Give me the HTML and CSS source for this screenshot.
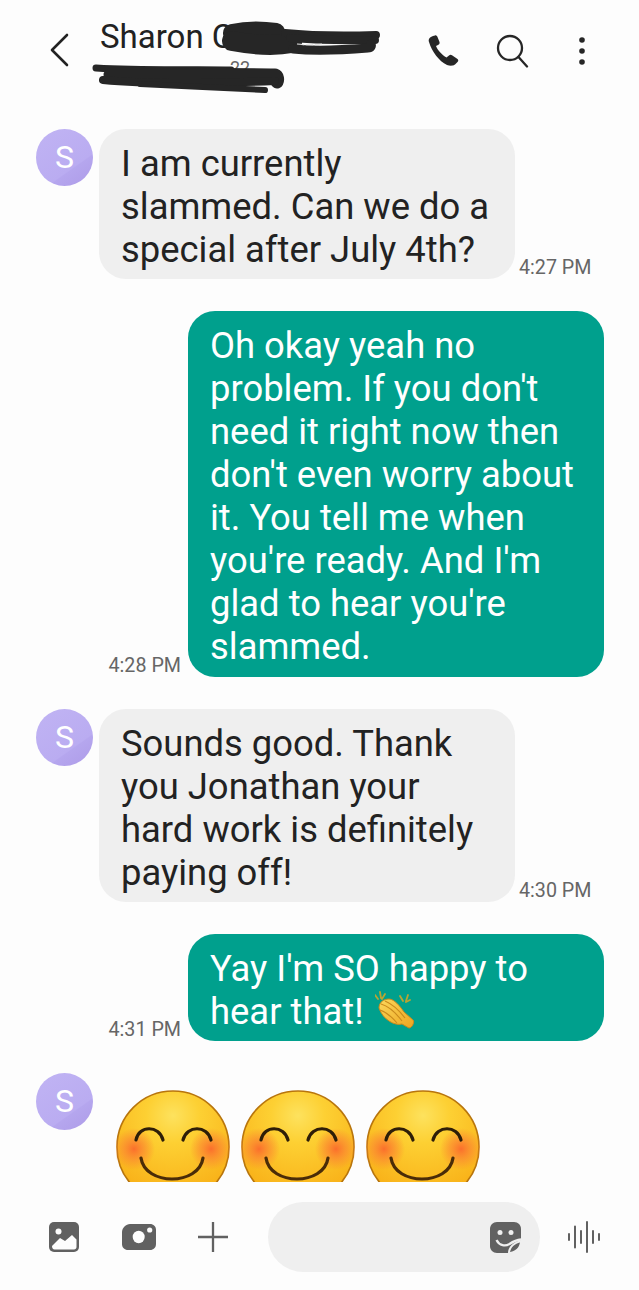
FILE: index.html
```html
<!DOCTYPE html>
<html lang="en">
<head>
    <meta charset="UTF-8">
    <meta name="viewport" content="width=device-width, initial-scale=1.0">
    <title>Sharon</title>
    <link rel="stylesheet" href="styles.css">
</head>
<body>
    <svg class="defs" width="0" height="0">
        <defs>
            <radialGradient id="faceFill" cx="50%" cy="22%" r="80%">
                <stop offset="0" stop-color="#fde25e"/>
                <stop offset="0.3" stop-color="#fdd033"/>
                <stop offset="1" stop-color="#f8ac14"/>
            </radialGradient>
            <radialGradient id="blushFill">
                <stop offset="0" stop-color="#fb6f2c"/>
                <stop offset="0.5" stop-color="#fb8a30" stop-opacity="0.7"/>
                <stop offset="1" stop-color="#fb8a30" stop-opacity="0"/>
            </radialGradient>
            <linearGradient id="clapFill" x1="0" y1="0" x2="1" y2="1">
                <stop offset="0" stop-color="#fbd75c"/>
                <stop offset="1" stop-color="#eda51f"/>
            </linearGradient>
            <linearGradient id="avatarFill" x1="0.2" y1="0.1" x2="0.8" y2="0.95">
                <stop offset="0" stop-color="#bfb2f3"/>
                <stop offset="0.7" stop-color="#baacf1"/>
                <stop offset="0.72" stop-color="#b5a6ee"/>
                <stop offset="1" stop-color="#b09fea"/>
            </linearGradient>
            <symbol id="smile" viewBox="0 0 114 114">
                <circle cx="57" cy="57" r="56" fill="url(#faceFill)" stroke="#b8750c" stroke-width="1.600"/>
                <circle cx="18" cy="59" r="21" fill="url(#blushFill)"/>
                <circle cx="95" cy="59" r="21" fill="url(#blushFill)"/>
                <path d="M20 50c3-15 23-15 27 0M67 50c4-15 24-15 28 0" fill="none" stroke="#2e1e08" stroke-width="3.200" stroke-linecap="round"/>
                <path d="M25 68c4 28 58 28 62 0" fill="none" stroke="#4a2c08" stroke-width="3.200" stroke-linecap="round"/>
            </symbol>
        </defs>
    </svg>

    <div class="screen">
        <header class="topbar">
            <svg class="back" width="20" height="34" viewBox="0 0 20 34"><path d="M18 2 3 17l15 15" fill="none" stroke="#222" stroke-width="2.600" stroke-linecap="round" stroke-linejoin="round"/></svg>
            <div class="contact">
                <div class="contact-name">Sharon C</div>
                <div class="contact-number">22</div>
            </div>
            <div class="actions">
                <svg width="31" height="32" viewBox="0 0 31 32"><path d="M1 7C0 4 2 2 5 1l2-.5C8 0 9 1 9.500 2l2 5c.5 1.500-.5 2.500-1.500 3l-2 1c1.500 4 6 9 10.500 11.500l2.500-2c1-1 2-1 3-.3l5.500 3.800c1 1 1 2 0 3L27 29.500c-2 1.500-5 1.500-8 .5C11 26 4 17 1 7z" fill="#262626"/></svg>
                <svg class="search" width="34" height="34" viewBox="0 0 34 34"><circle cx="14" cy="14" r="12" fill="none" stroke="#262626" stroke-width="2.300"/><path d="m22.500 23 8.500 9.500" fill="none" stroke="#262626" stroke-width="2.300" stroke-linecap="round"/></svg>
                <svg class="dots" width="8" height="32" viewBox="0 0 8 32"><circle cx="4" cy="5" r="2.800" fill="#262626"/><circle cx="4" cy="16" r="2.800" fill="#262626"/><circle cx="4" cy="27" r="2.800" fill="#262626"/></svg>
            </div>
            <!-- marker scribbles over the name and number -->
            <svg class="scribble" width="639" height="120" viewBox="0 0 639 120">
                <g fill="none" stroke="#262626" stroke-linecap="round" stroke-linejoin="round">
                    <path d="M232 33c14-3 30-3 44-1" stroke-width="18"/>
                    <path d="M232 41c16 3 40 6 60 2" stroke-width="20"/>
                    <path d="M285 33c30 3 60 3 91 2" stroke-width="8"/>
                    <path d="M290 38c25 2 50 3 85 2" stroke-width="8"/>
                    <path d="M293 49c20 2 50 1 75-1 3 0 4-2 3-4" stroke-width="9"/>
                </g>
                <path d="M297 44c8 1 18 1 25 0" fill="none" stroke="#e8e8e8" stroke-width="1.200" stroke-dasharray="7 2"/>
                <g fill="none" stroke="#262626" stroke-linecap="round" stroke-linejoin="round">
                    <path d="M96 68c50 3 100 1 135 2" stroke-width="7"/>
                    <path d="M110 75c50 0 120-1 165 0 3 1 3 5 2 7" stroke-width="13"/>
                    <path d="M103 80c30 3 90 4 172 1" stroke-width="8"/>
                    <path d="M140 84c40 2 85 4 125 6" stroke-width="6"/>
                </g>
            </svg>
        </header>

        <main class="thread">
            <div class="row row-in">
                <div class="avatar"><svg width="57" height="57" viewBox="0 0 57 57"><circle cx="28.500" cy="28.500" r="28.500" fill="url(#avatarFill)"/></svg><span>S</span></div>
                <div class="bubble bubble-in">I am currently slammed. Can we do a special after July 4th?</div>
                <time class="stamp">4:27 PM</time>
            </div>
            <div class="row row-out">
                <time class="stamp">4:28 PM</time>
                <div class="bubble bubble-out">Oh okay yeah no problem. If you don't need it right now then don't even worry about it. You tell me when you're ready. And I'm glad to hear you're slammed.</div>
            </div>
            <div class="row row-in">
                <div class="avatar"><svg width="57" height="57" viewBox="0 0 57 57"><circle cx="28.500" cy="28.500" r="28.500" fill="url(#avatarFill)"/></svg><span>S</span></div>
                <div class="bubble bubble-in">Sounds good. Thank you Jonathan your hard work is definitely paying off!</div>
                <time class="stamp">4:30 PM</time>
            </div>
            <div class="row row-out">
                <time class="stamp">4:31 PM</time>
                <div class="bubble bubble-out">Yay I'm SO happy to hear that!
                    <svg class="clap" width="42" height="40" viewBox="0 0 42 40">
                        <path d="M4 17c0-6 5-9 10-9s11 7 15 13l9 8c2 2-1 8-4 8l-7-4C20 35 8 29 4 17z" fill="url(#clapFill)" stroke="#c98a1c" stroke-width="1"/>
                        <path d="M6 13c7 2 15 9 21 17M10 10c7 3 14 9 20 17M5 19c6 2 12 7 17 13" fill="none" stroke="#c98a1c" stroke-width="1.100"/>
                        <path d="M0 4l3 4M5 1l1 6M10 3 7 8M25 5l3 5M33 4l-2 6M35 9l-4 2" fill="none" stroke="#b9a532" stroke-width="1.800" stroke-linecap="round"/>
                    </svg>
                </div>
            </div>
            <div class="row row-in">
                <div class="avatar"><svg width="57" height="57" viewBox="0 0 57 57"><circle cx="28.500" cy="28.500" r="28.500" fill="url(#avatarFill)"/></svg><span>S</span></div>
                <div class="emoji-row">
                    <svg width="114" height="114"><use href="#smile"/></svg>
                    <svg width="114" height="114"><use href="#smile"/></svg>
                    <svg width="114" height="114"><use href="#smile"/></svg>
                </div>
            </div>
        </main>

        <footer class="composer">
            <svg width="30" height="30" viewBox="0 0 30 30"><rect width="30" height="30" rx="5" fill="#616161"/><circle cx="9.500" cy="9.500" r="3" fill="#fdfdfd"/><path d="M3 24l8-8 5 3 7-6 4.500 4.500V25c0 1.500-1 2.500-2.500 2.500H5.500C4 27.500 3 26 3 24z" fill="#fdfdfd"/></svg>
            <svg class="camera" width="34" height="26" viewBox="0 0 34 26"><path d="M8 0h20c3.500 0 6 2.500 6 6v14c0 3.500-2.500 6-6 6H6c-3.500 0-6-2.500-6-6V8c0-4 4-8 8-8z" fill="#616161"/><ellipse cx="16.700" cy="13" rx="6" ry="6.200" fill="#fdfdfd"/><circle cx="27.700" cy="6" r="2.600" fill="#fdfdfd"/></svg>
            <svg width="30" height="30" viewBox="0 0 30 30"><path d="M15 0v30M0 15h30" fill="none" stroke="#616161" stroke-width="2.300" stroke-linecap="round"/></svg>
            <div class="input">
                <svg width="31" height="31" viewBox="0 0 31 31"><path d="M7 0h17c4 0 7 3 7 7v12L19 31H7c-4 0-7-3-7-7V7c0-4 3-7 7-7z" fill="#616161"/><circle cx="10" cy="10.500" r="2.500" fill="#efefef"/><circle cx="21" cy="10.500" r="2.500" fill="#efefef"/><path d="M6.500 18c3 6 9 6.500 13 4 3-2 6-4 11.500-4.500" fill="none" stroke="#efefef" stroke-width="2.300"/><path d="M18 31c0-6 5-11 13-13v13z" fill="#efefef"/><path d="M20 30c1-5 5-8.500 10-9.500-1 5-4 8.500-10 9.500z" fill="#616161"/></svg>
            </div>
            <svg class="voice" width="32" height="32" viewBox="0 0 32 32"><path d="M1 13v6M7 5.500v21M13 10v12M19 1v30M25 10v12M31 13v6" fill="none" stroke="#616161" stroke-width="2" stroke-linecap="round"/></svg>
        </footer>
    </div>
</body>
</html>
```

FILE: styles.css
```css
html, body {
    margin: 0;
    padding: 0;
}
body {
    background-color: #fdfdfd;
    font-family: Roboto, "Liberation Sans", sans-serif;
    color: #222;
}
.defs {
    display: block;
    height: 0;
}
.screen {
    display: flex;
    flex-direction: column;
    width: 639px;
    height: 1290px;
    overflow: hidden;
}

/* top bar */
.topbar {
    position: relative;
    display: flex;
    align-items: flex-start;
    flex: none;
    height: 129px;
    box-sizing: border-box;
    padding: 33px 0 0 49px;
}
.back {
    flex: none;
}
.contact {
    width: 300px;
    margin: -15px 0 0 31px;
}
.contact-name {
    font-size: 33px;
    line-height: 38px;
    white-space: nowrap;
}
.contact-number {
    padding-left: 130px;
    font-size: 18px;
    line-height: 24px;
    color: #666;
}
.actions {
    display: flex;
    align-items: center;
    gap: 37px;
    margin: 1px 0 0 28px;
}
.dots {
    margin-left: 11px;
}
.scribble {
    position: absolute;
    left: 0;
    top: 0;
}

/* messages */
.thread {
    flex: 1;
    min-height: 0;
    overflow: hidden;
}
.row {
    display: flex;
    align-items: flex-end;
    gap: 4px;
    margin-bottom: 32px;
}
.row-in {
    align-items: flex-start;
    padding-left: 36px;
}
.row-out {
    justify-content: flex-end;
    gap: 7px;
    padding-right: 35px;
}
.avatar {
    position: relative;
    flex: none;
    width: 57px;
    height: 57px;
    margin: 0 2px 0 0;
}
.avatar svg {
    display: block;
}
.avatar span {
    position: absolute;
    left: 0;
    top: 0;
    width: 57px;
    line-height: 57px;
    text-align: center;
    font-size: 32px;
    color: #fff;
}
.bubble {
    box-sizing: border-box;
    width: 416px;
    padding: 13px 22px 8px;
    border-radius: 27px;
    font-size: 36.400px;
    line-height: 43.050px;
}
.bubble-in {
    background-color: #efefef;
    color: #222;
}
.bubble-out {
    background-color: #00a08d;
    color: #fff;
}
.stamp {
    font-size: 19.700px;
    line-height: 22px;
    color: #666;
    white-space: nowrap;
}
.row-in .stamp {
    align-self: flex-end;
}
.clap {
    vertical-align: -7px;
    margin-left: 2px;
}
.emoji-row {
    display: flex;
    gap: 11px;
    margin: 17px 0 0 17px;
}
.emoji-row svg {
    flex: none;
}

/* bottom bar */
.composer {
    display: flex;
    align-items: center;
    flex: none;
    height: 108px;
    box-sizing: border-box;
    padding: 2px 0 0 49px;
    gap: 42px;
    background-color: #fdfdfd;
}
.camera {
    margin-left: 1px;
}
.input {
    display: flex;
    align-items: center;
    justify-content: flex-end;
    box-sizing: border-box;
    width: 272px;
    height: 70px;
    margin-left: -2px;
    padding-right: 19px;
    border-radius: 35px;
    background-color: #efefef;
}
.voice {
    margin-left: -14px;
}
```
